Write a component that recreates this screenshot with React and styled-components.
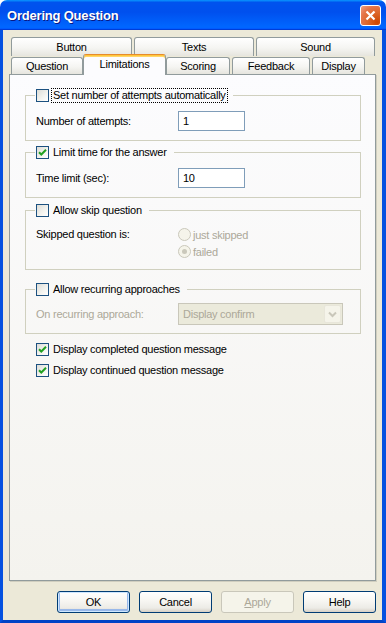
import React from 'react';
import styled, { createGlobalStyle, css } from 'styled-components';

const GlobalStyle = createGlobalStyle`
  html, body {
    margin: 0;
    padding: 0;
    background: #ffffff;
  }
  body {
    font-family: "Liberation Sans", Arial, sans-serif;
    font-size: 11px;
    letter-spacing: -0.25px;
  }
`;

const Window = styled.div`
  width: 386px;
  height: 623px;
  display: flex;
  flex-direction: column;
`;

const TitleBar = styled.div`
  height: 30px;
  flex-shrink: 0;
  border-radius: 7px 7px 0 0;
  background: linear-gradient(180deg, #0997ff, #0053ee 8%, #0050ee 40%, #0066ff 88%, #0066ff 93%, #005bff 95%, #003dd7 96%, #003dd7);
  display: flex;
  align-items: center;
  justify-content: space-between;
  padding: 0 5px 0 7px;
`;

const Title = styled.span`
  color: #ffffff;
  font: bold 13px "Liberation Sans", Arial, sans-serif;
  letter-spacing: -0.2px;
  text-shadow: 1px 1px 0 #0a1883;
  margin-top: 1px;
`;

const CloseButton = styled.div`
  width: 21px;
  height: 21px;
  box-sizing: border-box;
  border: 1px solid #ffffff;
  border-radius: 3px;
  background: radial-gradient(circle at 85% 85%, #cc4600 0%, #dc6527 40%, #e5754a 70%, #f0a284 100%);
  display: flex;
  align-items: center;
  justify-content: center;
  margin-top: 1px;
`;

const Body = styled.div`
  flex: 1;
  background: #ece9d8;
  border-left: 3px solid #0551e0;
  border-right: 4px solid #0551e0;
  border-bottom: 3px solid #0043c6;
  padding: 7px 6px 7px 6px;
  display: flex;
  flex-direction: column;
`;

const TabRow = styled.div`
  display: flex;
  align-items: flex-end;
  height: ${({ h }) => h}px;
  padding-left: 2px;
`;

const Tab = styled.div`
  width: ${({ w }) => w}px;
  height: ${({ h }) => h}px;
  margin-left: ${({ ml }) => ml || 0}px;
  box-sizing: border-box;
  border: 1px solid #919b9c;
  border-bottom: none;
  border-radius: 3px 3px 0 0;
  background: linear-gradient(180deg, #ffffff 0%, #f5f5f2 55%, #e6e5de 100%);
  display: flex;
  align-items: center;
  justify-content: center;
  color: #000000;

  ${({ active }) =>
    active &&
    css`
      height: 21px;
      margin-bottom: -1px;
      position: relative;
      z-index: 1;
      border-top: 1px solid #e68b2c;
      box-shadow: inset 0 1px 0 #ffc73c, inset 0 2px 0 #ffd56a;
      background: #fcfcfe;
      padding-bottom: 2px;
    `}
`;

const Panel = styled.div`
  flex: 1;
  border: 1px solid #919b9c;
  box-shadow: 1px 1px 0 #d0cebf;
  background: linear-gradient(180deg, #fcfcfe 0%, #f4f3ee 100%);
  padding: 13px 14px 0 15px;
  display: flex;
  flex-direction: column;
`;

const Group = styled.fieldset`
  margin: ${({ mt }) => mt || 0}px 0 0 0;
  padding: ${({ pt }) => pt}px 10px ${({ pb }) => pb}px 9px;
  border: 1px solid #d0d0bf;
  min-width: 0;
`;

const Legend = styled.legend`
  padding: 0 5px 0 1px;
  height: 15px;
  display: flex;
  align-items: center;
`;

const Label = styled.span`
  margin-left: 2px;
  padding: 0 1px;
  line-height: 13px;
  border: 1px solid transparent;
  color: ${({ disabled }) => (disabled ? '#aca899' : '#000000')};

  ${({ focused }) =>
    focused &&
    css`
      border: 1px dotted #000000;
    `}
`;

const FieldRow = styled.div`
  display: grid;
  grid-template-columns: 143px 1fr;
  align-items: ${({ top }) => (top ? 'start' : 'center')};
`;

const FieldLabel = styled.span`
  color: ${({ disabled }) => (disabled ? '#aca899' : '#000000')};
  padding-left: 1px;
  line-height: 17px;
`;

const TextBox = styled.div`
  width: 67px;
  height: 20px;
  box-sizing: border-box;
  border: 1px solid #7f9db9;
  background: #ffffff;
  padding-left: 4px;
  display: flex;
  align-items: center;
`;

const RadioList = styled.div`
  display: flex;
  flex-direction: column;
`;

const RadioRow = styled.div`
  height: 17px;
  display: flex;
  align-items: center;
  color: #aca899;
`;

const RadioCircle = styled.span`
  width: 13px;
  height: 13px;
  box-sizing: border-box;
  border: 1px solid #cac8bb;
  border-radius: 50%;
  background: #f5f4ea;
  display: flex;
  align-items: center;
  justify-content: center;
  margin-right: 2px;

  &::after {
    content: '';
    width: 5px;
    height: 5px;
    border-radius: 50%;
    background: ${({ checked }) => (checked ? '#cac8bb' : 'transparent')};
  }
`;

const Select = styled.div`
  width: 165px;
  height: 22px;
  box-sizing: border-box;
  border: 1px solid #c9c7ba;
  background: #ebeadb;
  display: flex;
  align-items: center;
  padding: 1px;
  color: #aca899;
`;

const SelectText = styled.span`
  flex: 1;
  padding-left: 3px;
`;

const SelectArrow = styled.span`
  width: 17px;
  height: 18px;
  box-sizing: border-box;
  border: 1px solid #e8e6da;
  border-radius: 2px;
  background: #f5f4ea;
  display: flex;
  align-items: center;
  justify-content: center;
`;

const CheckRow = styled.div`
  height: 16px;
  display: flex;
  align-items: center;
  padding-left: 11px;
  margin-top: ${({ mt }) => mt}px;
`;

const Box = styled.span`
  width: 13px;
  height: 13px;
  box-sizing: border-box;
  flex-shrink: 0;
  border: 1px solid #1c5180;
  background: linear-gradient(135deg, #dcdcd7 0%, #f4f4f0 60%, #ffffff 100%);
  display: flex;
  align-items: center;
  justify-content: center;
`;

const ButtonRow = styled.div`
  display: flex;
  justify-content: flex-end;
  gap: 9px;
  margin-top: 10px;
`;

const Button = styled.button`
  width: 73px;
  height: 22px;
  box-sizing: border-box;
  border: 1px solid #003c74;
  border-radius: 3px;
  padding: 0;
  background: linear-gradient(180deg, #ffffff 0%, #f7f6f2 45%, #ecebe6 80%, #d6d0c5 100%);
  font: 11px "Liberation Sans", Arial, sans-serif;
  letter-spacing: -0.25px;
  color: #000000;

  ${({ primary }) =>
    primary &&
    css`
      box-shadow: inset 0 0 0 1px #cee7ff, inset 0 -1px 0 2px #98b8ea;
    `}

  &:disabled {
    border-color: #c9c7ba;
    background: #f5f4ea;
    color: #aca899;
  }
`;

const Check = ({ checked }) => (
  <Box>
    {checked && (
      <svg width="9" height="9" viewBox="0 0 9 9">
        <path d="M1 4.2 L3.3 6.5 L8 1.8" fill="none" stroke="#21a121" strokeWidth="2" />
      </svg>
    )}
  </Box>
);

const topTabs = [
  { label: 'Button', w: 121, ml: 0 },
  { label: 'Texts', w: 120, ml: 2 },
  { label: 'Sound', w: 119, ml: 2 },
];

const bottomTabs = [
  { label: 'Question', w: 72, ml: 0 },
  { label: 'Limitations', w: 83, ml: 0, active: true },
  { label: 'Scoring', w: 64, ml: 0 },
  { label: 'Feedback', w: 78, ml: 2 },
  { label: 'Display', w: 53, ml: 2 },
];

const App = () => (
  <>
    <GlobalStyle />
    <Window>
      <TitleBar>
        <Title>Ordering Question</Title>
        <CloseButton>
          <svg width="11" height="11" viewBox="0 0 11 11">
            <path d="M1.5 1.5 L9.5 9.5 M9.5 1.5 L1.5 9.5" stroke="#ffffff" strokeWidth="2.2" />
          </svg>
        </CloseButton>
      </TitleBar>
      <Body>
        <TabRow h={19}>
          {topTabs.map((t) => (
            <Tab key={t.label} w={t.w} h={19} ml={t.ml}>
              {t.label}
            </Tab>
          ))}
        </TabRow>
        <TabRow h={18}>
          {bottomTabs.map((t) => (
            <Tab key={t.label} w={t.w} h={17} ml={t.ml} active={t.active}>
              {t.label}
            </Tab>
          ))}
        </TabRow>
        <Panel>
          <Group pt={8} pb={9}>
            <Legend>
              <Check />
              <Label focused>Set number of attempts automatically</Label>
            </Legend>
            <FieldRow>
              <FieldLabel>Number of attempts:</FieldLabel>
              <TextBox>1</TextBox>
            </FieldRow>
          </Group>
          <Group mt={4} pt={8} pb={9}>
            <Legend>
              <Check checked />
              <Label>Limit time for the answer</Label>
            </Legend>
            <FieldRow>
              <FieldLabel>Time limit (sec):</FieldLabel>
              <TextBox>10</TextBox>
            </FieldRow>
          </Group>
          <Group mt={5} pt={8} pb={9}>
            <Legend>
              <Check />
              <Label>Allow skip question</Label>
            </Legend>
            <FieldRow top>
              <FieldLabel>Skipped question is:</FieldLabel>
              <RadioList>
                <RadioRow>
                  <RadioCircle />
                  just skipped
                </RadioRow>
                <RadioRow>
                  <RadioCircle checked />
                  failed
                </RadioRow>
              </RadioList>
            </FieldRow>
          </Group>
          <Group mt={12} pt={6} pb={8}>
            <Legend>
              <Check />
              <Label>Allow recurring approaches</Label>
            </Legend>
            <FieldRow>
              <FieldLabel disabled>On recurring approach:</FieldLabel>
              <Select>
                <SelectText>Display confirm</SelectText>
                <SelectArrow>
                  <svg width="9" height="7" viewBox="0 0 9 7">
                    <path d="M1 1.5 L4.5 5 L8 1.5" fill="none" stroke="#c9c7ba" strokeWidth="2" />
                  </svg>
                </SelectArrow>
              </Select>
            </FieldRow>
          </Group>
          <CheckRow mt={7}>
            <Check checked />
            <Label>Display completed question message</Label>
          </CheckRow>
          <CheckRow mt={5}>
            <Check checked />
            <Label>Display continued question message</Label>
          </CheckRow>
        </Panel>
        <ButtonRow>
          <Button primary>OK</Button>
          <Button>Cancel</Button>
          <Button disabled>
            <u>A</u>pply
          </Button>
          <Button>Help</Button>
        </ButtonRow>
      </Body>
    </Window>
  </>
);

export default App;
